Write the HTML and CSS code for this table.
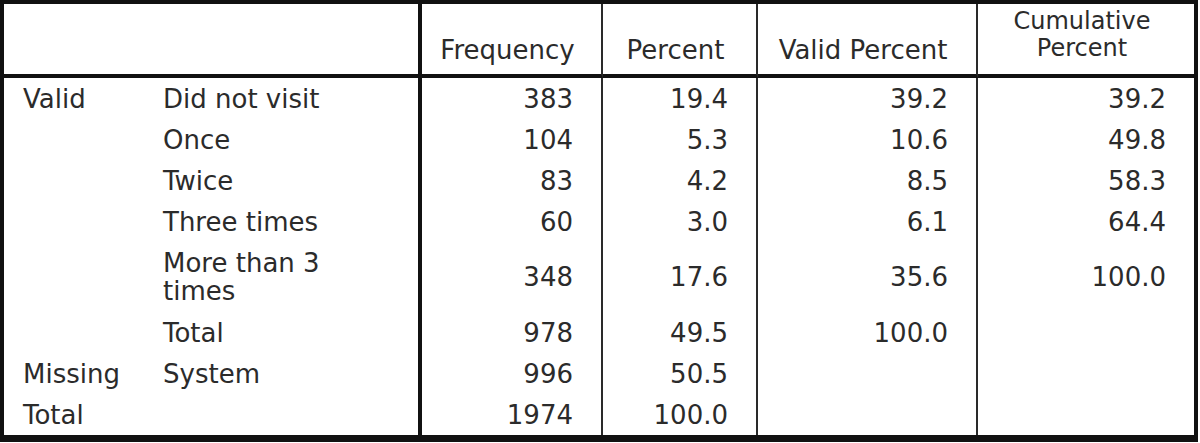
FILE: index.html
```html
<!DOCTYPE html>
<html lang="en">
<head>
  <meta charset="UTF-8">
  <title>Frequencies</title>
  <link rel="stylesheet" href="styles.css">
</head>
<body>
  <table class="freq-table">
    <colgroup>
      <col class="col-group">
      <col class="col-label">
      <col class="col-freq">
      <col class="col-pct">
      <col class="col-valid">
      <col class="col-cum">
    </colgroup>
    <thead>
      <tr>
        <th colspan="2" class="corner"></th>
        <th class="thin">Frequency</th>
        <th class="thin">Percent</th>
        <th class="thin">Valid Percent</th>
        <th class="cum-head">Cumulative<br>Percent</th>
      </tr>
    </thead>
    <tbody>
      <tr>
        <td class="group">Valid</td>
        <td class="label">Did not visit</td>
        <td class="num thin">383</td>
        <td class="num thin">19.4</td>
        <td class="num thin">39.2</td>
        <td class="num">39.2</td>
      </tr>
      <tr>
        <td class="group"></td>
        <td class="label">Once</td>
        <td class="num thin">104</td>
        <td class="num thin">5.3</td>
        <td class="num thin">10.6</td>
        <td class="num">49.8</td>
      </tr>
      <tr>
        <td class="group"></td>
        <td class="label">Twice</td>
        <td class="num thin">83</td>
        <td class="num thin">4.2</td>
        <td class="num thin">8.5</td>
        <td class="num">58.3</td>
      </tr>
      <tr>
        <td class="group"></td>
        <td class="label">Three times</td>
        <td class="num thin">60</td>
        <td class="num thin">3.0</td>
        <td class="num thin">6.1</td>
        <td class="num">64.4</td>
      </tr>
      <tr class="tall">
        <td class="group"></td>
        <td class="label">More than 3<br>times</td>
        <td class="num thin">348</td>
        <td class="num thin">17.6</td>
        <td class="num thin">35.6</td>
        <td class="num">100.0</td>
      </tr>
      <tr>
        <td class="group"></td>
        <td class="label">Total</td>
        <td class="num thin">978</td>
        <td class="num thin">49.5</td>
        <td class="num thin">100.0</td>
        <td class="num"></td>
      </tr>
      <tr>
        <td class="group">Missing</td>
        <td class="label">System</td>
        <td class="num thin">996</td>
        <td class="num thin">50.5</td>
        <td class="num thin"></td>
        <td class="num"></td>
      </tr>
      <tr>
        <td class="group">Total</td>
        <td class="label"></td>
        <td class="num thin">1974</td>
        <td class="num thin">100.0</td>
        <td class="num thin"></td>
        <td class="num"></td>
      </tr>
    </tbody>
  </table>
</body>
</html>
```

FILE: styles.css
```css
body { margin: 0; padding: 0; background: #fff; color: #2b2b2b; font-family: "DejaVu Sans", Verdana, sans-serif; font-size: 26px; }

.freq-table {
  width: 1198px;
  table-layout: fixed;
  border-collapse: separate;
  border-spacing: 0;
  border-style: solid;
  border-color: #111;
  border-width: 4px 4px 7px 4px;
}
.col-group { width: 140px; }
.col-label { width: 278px; }
.col-freq { width: 181px; }
.col-pct { width: 155px; }
.col-valid { width: 220px; }
.col-cum { width: 216px; }

th, td {
  box-sizing: border-box;
  padding: 0;
  line-height: 28px;
  font-weight: normal;
  white-space: nowrap;
}

thead th {
  height: 74px;
  vertical-align: bottom;
  text-align: center;
  padding: 0 8px 10px 0;
  border-bottom: 4px solid #111;
}
thead th.corner { border-right: 4px solid #111; }
thead th.cum-head { font-size: 24px; line-height: 27px; padding-bottom: 12px; }

tbody td {
  height: 41px;
  vertical-align: middle;
}
tbody tr.tall td { height: 70px; }

td.group { padding-left: 19px; }
td.label { padding-left: 19px; border-right: 4px solid #111; }
td.num { text-align: right; padding-right: 28px; }
.thin { border-right: 2px solid #2a2a2a; }
```
